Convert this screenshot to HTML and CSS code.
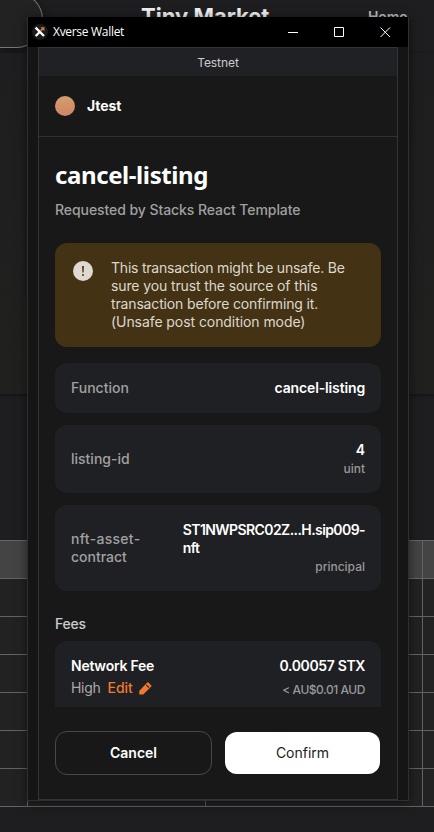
FILE: index.html
```html
<!DOCTYPE html>
<html lang="en">
<head>
<meta charset="utf-8">
<title>Xverse Wallet</title>
<link rel="stylesheet" href="styles.css">
</head>
<body>
<div class="site">
  <div class="site-bar">
    <div class="site-logo"></div>
    <h1 class="site-title">Tiny Market</h1>
    <span class="site-nav">Home</span>
  </div>
  <div class="site-hero"></div>
  <div class="site-table">
    <div class="site-row site-head"><i></i><i></i><i></i><i></i></div>
    <div class="site-row"><i></i><i></i><i></i><i></i></div>
    <div class="site-row"><i></i><i></i><i></i><i></i></div>
    <div class="site-row"><i></i><i></i><i></i><i></i></div>
    <div class="site-row"><i></i><i></i><i></i><i></i></div>
    <div class="site-row"><i></i><i></i><i></i><i></i></div>
    <div class="site-row"><i></i><i></i><i></i><i></i></div>
  </div>
</div>

<main class="window">
  <header class="titlebar">
    <svg class="app-icon" width="16" height="16" viewBox="0 0 16 16"><circle cx="8" cy="8" r="8" fill="#1b1b1b"/><path d="M3.600 3.600 12 12M3.700 12 7.500 8.200" stroke="#fff" stroke-width="2.300"/><path d="M8.500 3.300h3.900v3.900l-1.500-1.500-1.700 1.700-1.200-1.200 1.700-1.600z" fill="#c77d4c"/></svg>
    <span class="app-name">Xverse Wallet</span>
    <svg class="controls" width="103" height="11" viewBox="0 0 103 11" fill="none" stroke="#fff"><path d="M0 5.500h10M46.500.5h9v9h-9zM92.500.5l9.500 9.500M102 .5 92.500 10"/></svg>
  </header>
  <div class="panel">
    <div class="network">Testnet</div>
    <div class="account"><span class="avatar"></span><span class="account-name">Jtest</span></div>
    <div class="scroll">
      <h2 class="heading">cancel-listing</h2>
      <p class="requested">Requested by Stacks React Template</p>
      <div class="warning">
        <svg width="20" height="20" viewBox="0 0 20 20"><circle cx="10" cy="10" r="10" fill="#dedad2"/><path d="M9.100 5h1.800l-.3 6.500H9.400z" fill="#443414"/><circle cx="10" cy="14" r="1" fill="#443414"/></svg>
        <p><span class="w1">This transaction might be unsafe. Be</span><br><span class="w2">sure you trust the source of this</span><br><span class="w3">transaction before confirming it.</span><br><span class="w4">(Unsafe post condition mode)</span></p>
      </div>
      <div class="card card-fn"><span class="label l-fn">Function</span><strong class="v-fn">cancel-listing</strong></div>
      <div class="card card-id"><span class="label l-id">listing-id</span><div class="value"><strong>4</strong><small class="t-uint">uint</small></div></div>
      <div class="card card-nft"><span class="label"><span class="l-nft">nft-asset-</span><br>contract</span><div class="value"><strong class="v-nft">ST1NWPSRC02Z...H.sip009-<br>nft</strong><small class="t-prin">principal</small></div></div>
      <h3 class="fees-title">Fees</h3>
      <div class="fee">
        <div class="fee-left"><strong class="fee-name">Network Fee</strong>
          <div class="fee-edit"><span class="high">High</span><span class="edit">Edit</span><svg width="13" height="13" viewBox="0 0 13 13" fill="#ee7a30"><path fill-rule="evenodd" d="M8.300.6q.6-.6 1.200 0l2.800 2.800q.6.600 0 1.200L4.500 12.200q-.3.300-.8.300H.9q-.6 0-.6-.6V9.200q0-.5.3-.8zM7.700 2.400 6.900 3.200 9.700 6l.8-.8z"/></svg></div>
        </div>
        <div class="fee-right"><strong class="fee-stx">0.00057 STX</strong><small class="fee-aud">&lt; AU$0.01 AUD</small></div>
      </div>
    </div>
    <div class="actions"><button class="cancel">Cancel</button><button class="confirm">Confirm</button></div>
  </div>
</main>
</body>
</html>
```
FILE: styles.css
```css
* { box-sizing: border-box; }
body { margin: 0; width: 434px; height: 832px; overflow: hidden; position: relative; background: #1e1e1f; color: #fff; font: 500 14px/18px Inter, sans-serif; }
h1, h2, h3, p { margin: 0; }
strong { font-weight: 600; }
i { font-style: normal; }

.site { height: 832px; display: flex; flex-direction: column; overflow: hidden; background: #1e1e20; }
.site-bar { height: 53px; flex: none; display: flex; background: #1e1e20; }
.site-logo { width: 43px; height: 55px; flex: none; margin-top: -7px; border: 1px solid #777; border-left: 0; border-radius: 0 26px 26px 0; background: #222223; box-shadow: 0 2px 8px #111; }
.site-title { margin: 1px 0 0 98px; width: 129px; white-space: nowrap; font: 700 22px/30px Inter, sans-serif; letter-spacing: 0; color: #eee; }
.site-nav { margin: 8px 0 0 98px; font: 600 14px/18px Inter, sans-serif; letter-spacing: -.1px; color: #bbb; }
.site-hero { height: 341px; flex: none; background: linear-gradient(#1e1e20, #1f1f1f 30%, #20201f); box-shadow: 0 1px 3px #111; }
.site-table { margin-top: 146px; display: flex; flex-direction: column; border-bottom: 1px solid #646464; }
.site-row { height: 38px; display: grid; grid-template-columns: 28px 178px 217px 11px; border-top: 1px solid #646464; background: #222; }
.site-row i { border-right: 1px solid #646464; }
.site-row i:last-child { border: 0; }
.site-head { background: #444; }

.window { position: absolute; left: 27px; top: 17px; width: 382px; height: 784px; display: flex; flex-direction: column; border: 1px solid #2f2f2f; border-top: 0; background: #151515; box-shadow: 0 2px 10px #0008; }
.titlebar { height: 30px; flex: none; display: flex; align-items: center; padding-left: 4px; background: #000; }
.app-name { margin-left: 5px; width: 72px; white-space: nowrap; font: 400 12px/16px "Open Sans", sans-serif; letter-spacing: -.3px; }
.controls { margin-left: 163px; }
.panel { width: 360px; height: 753px; margin-left: 10px; display: flex; flex-direction: column; border: 1px solid #343434; background: #181818; }
.network { height: 28px; flex: none; background: #202124; text-align: center; font-size: 12px; line-height: 29px; font-weight: 400; letter-spacing: -.05px; color: #ccc; }
.account { height: 61px; flex: none; display: flex; align-items: center; padding-left: 16px; border-bottom: 1px solid #303030; }
.avatar { width: 20px; height: 20px; border-radius: 50%; background: linear-gradient(170deg, #d3a06b, #cf8266); }
.account-name { margin-left: 12px; font-weight: 700; }
.scroll { height: 570px; flex: none; padding: 23px 16px 0; overflow: hidden; white-space: nowrap; }
.heading { font: 700 24px/29px "Noto Sans", sans-serif; letter-spacing: -.4px; }
.requested { margin-top: 12px; color: #a0a0a0; letter-spacing: -.07px; }
.warning { height: 104px; margin-top: 24px; display: flex; padding: 16px 18px; border-radius: 12px; background: #433314; color: #ddd8ce; font-weight: 400; }
.warning svg { margin-top: 2px; flex: none; }
.warning p { margin-left: 18px; }
.w1 { letter-spacing: -.22px; }
.w2 { letter-spacing: -.12px; }
.w3 { letter-spacing: -.15px; }
.w4 { letter-spacing: -.07px; }
.card { margin-top: 12px; display: flex; align-items: center; justify-content: space-between; padding: 0 16px; border-radius: 12px; background: #1f2023; }
.card-fn { height: 50px; margin-top: 16px; }
.card-id { height: 68px; }
.card-nft { height: 86px; }
.label { color: #a1a1a1; }
.l-nft { letter-spacing: .3px; }
.v-fn { letter-spacing: -.14px; }
.v-nft { letter-spacing: -.58px; }
.value { display: flex; flex-direction: column; }
.value small { margin-top: 1px; align-self: flex-end; font-size: 12px; line-height: 18px; color: #999; }
.card-id .value { align-items: flex-end; }
.fees-title { margin-top: 24px; font-size: 14px; font-weight: 500; line-height: 18px; letter-spacing: -.2px; color: #ccc; }
.fee { height: 86px; margin-top: 8px; display: flex; justify-content: space-between; padding: 16px; border-radius: 12px; background: #1f2023; }
.fee-left, .fee-right { display: flex; flex-direction: column; }
.fee-right { align-items: flex-end; }
.fee-name { letter-spacing: -.25px; }
.fee-stx { letter-spacing: -.36px; }
.fee-edit { display: flex; align-items: center; margin-top: 4px; }
.high { color: #aaa; font-weight: 400; letter-spacing: -.3px; }
.edit { margin: 0 6px 0 7px; color: #ee7a30; }
.fee-aud { margin-top: 6px; font-size: 12px; line-height: 18px; letter-spacing: -.45px; color: #999; }
.actions { display: flex; gap: 13px; padding: 24px 16px 0; }
button { height: 44px; border-radius: 12px; padding: 0; font: 600 14px/18px Inter, sans-serif; }
.cancel { width: 157px; border: 1px solid #484848; background: transparent; color: #fff; }
.confirm { width: 155px; height: 42px; margin-top: 1px; border: 0; background: #fff; color: #222; font-weight: 400; }
```
